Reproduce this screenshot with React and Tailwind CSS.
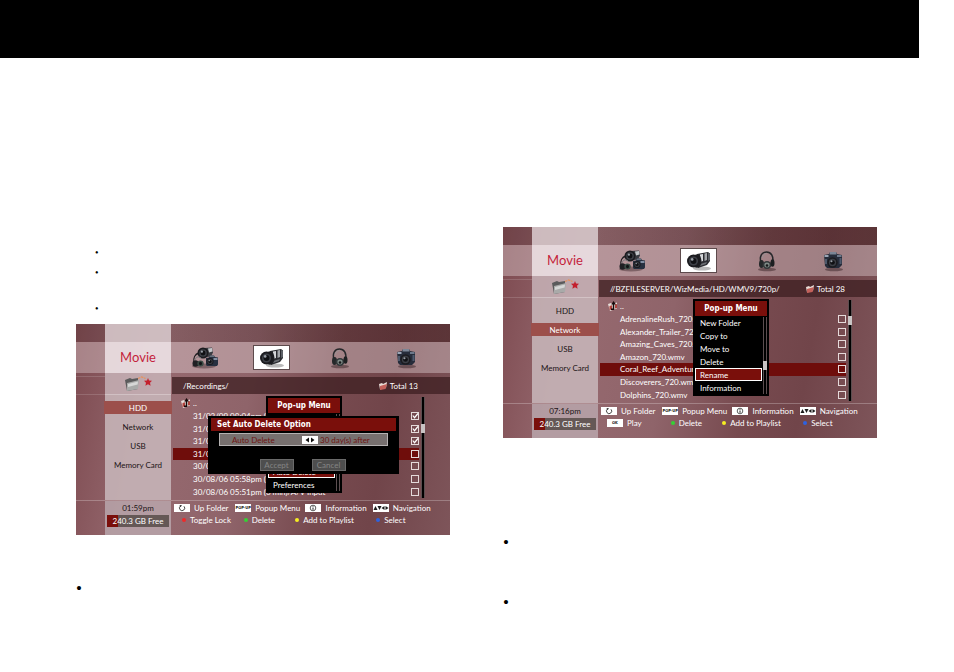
import React from "react";
import clsx from "clsx";

const SECTIONS = ["HDD", "Network", "USB", "Memory Card"];

function Lens({ x, y, r }) {
  return (
    <g>
      <circle cx={x} cy={y} r={r} fill="#1b1b1f" />
      <circle cx={x} cy={y} r={r * 0.7} fill="#3c3f46" />
      <circle cx={x} cy={y} r={r * 0.45} fill="#101114" />
      <circle cx={x - r * 0.2} cy={y - r * 0.25} r={r * 0.2} fill="#9aa0a8" />
    </g>
  );
}

function AllMediaIcon() {
  return (
    <svg viewBox="0 0 28 24" className="h-6 w-7" aria-label="All media">
      <ellipse cx="13" cy="20" rx="12" ry="2.500" fill="#4a3236" opacity=".5" />
      <path d="M13 2l8-.5 1 5-2 4-8 1z" fill="#3a3c42" />
      <path d="M17 2.500l4-.5.500 3.500-3.500 1z" fill="#c3c6c9" />
      <Lens x={12} cy={7} y={7} r={5.500} />
      <path d="M3 17c-1-5 1-9 5-10" fill="none" stroke="#1d1d20" strokeWidth="1.300" />
      <path d="M4 14c1-4 5-4 7-1" fill="none" stroke="#77797c" strokeWidth="1" />
      <ellipse cx="4.500" cy="17.500" rx="3" ry="3.200" fill="#202024" />
      <ellipse cx="9.500" cy="17.500" rx="3.200" ry="3" fill="#3a4a44" />
      <ellipse cx="9.500" cy="17.500" rx="1.500" ry="1.700" fill="#121416" />
      <path d="M15 12l3-.5 1-2h4l1 1.500 3 .5v7l-1 1.500H16l-1-1z" fill="#273040" />
      <path d="M19 9.500h4l.5 1.500h-5z" fill="#66727f" />
      <rect x="22.500" y="12" width="4" height="2" fill="#8390a4" />
      <Lens x={19} y={15.500} r={3.600} />
    </svg>
  );
}

function CamcorderIcon() {
  return (
    <svg viewBox="0 0 28 24" className="h-6 w-7" aria-label="Movie">
      <ellipse cx="17" cy="19.500" rx="9" ry="2" fill="#8a8a8a" opacity=".6" />
      <path d="M12 5l11-2 2 1.500V12l-3 4-9 3z" fill="#2b2c31" />
      <path d="M15 5.500l3-.6v7l-3 1z" fill="#d5d7da" />
      <path d="M19.500 4.500l2.500-.4v7l-2.500 1z" fill="#a5a8ac" />
      <path d="M23 4l2 1v6l-2 1z" fill="#5c6066" />
      <path d="M15 15l7-2-1 2-6 2z" fill="#6a6d72" />
      <ellipse cx="12" cy="12" rx="4.500" ry="6.800" fill="#1d1e22" />
      <Lens x={8.500} y={12} r={6.500} />
    </svg>
  );
}

function HeadphonesIcon() {
  return (
    <svg viewBox="0 0 28 24" className="h-6 w-7" aria-label="Music">
      <ellipse cx="15" cy="20.500" rx="9" ry="1.800" fill="#4a3236" opacity=".6" />
      <path d="M9 14C7 7 10 3 14.500 3S22 7 20.500 14" fill="none" stroke="#26272a" strokeWidth="1.500" />
      <path d="M10 9c1-3 2.500-4.500 4.500-4.500" fill="none" stroke="#94979a" strokeWidth=".7" />
      <ellipse cx="9.500" cy="15" rx="2.500" ry="4" fill="#25282a" />
      <ellipse cx="15" cy="16" rx="4.500" ry="4" fill="#33383a" />
      <ellipse cx="15" cy="16" rx="2.600" ry="2.400" fill="#7e8a86" />
      <ellipse cx="15" cy="16.500" rx="1.300" ry="1.200" fill="#17191b" />
      <ellipse cx="20.500" cy="14" rx="2" ry="3.800" fill="#1d1f21" />
    </svg>
  );
}

function CameraIcon() {
  return (
    <svg viewBox="0 0 28 24" className="h-6 w-7" aria-label="Photo">
      <ellipse cx="15" cy="20.500" rx="9" ry="1.800" fill="#4a3236" opacity=".6" />
      <path d="M5 6l5-1 1-2h6l1 2 5 1v10l-3 3H8l-2-2z" fill="#262c3a" />
      <path d="M11 3h6l.6 2.500h-7.200z" fill="#7a8596" />
      <rect x="5.500" y="6" width="4" height="2" fill="#9ba6b6" />
      <rect x="18" y="6" width="4.500" height="2" fill="#6c788a" />
      <path d="M6 10h2v5H6zM20.500 9h2v6h-2z" fill="#4d596c" />
      <Lens x={13.500} y={13.500} r={5.200} />
    </svg>
  );
}

function FolderStarIcon() {
  return (
    <svg viewBox="0 0 30 16" className="h-4 w-[30px]" aria-hidden="true">
      <path d="M2 4l5-2 2 1 6-1v11l-11 2z" fill="#5b5b5c" />
      <path d="M4 7l12-3-1 9-11 2z" fill="#a9aaa9" />
      <path d="M5 8l10-2.500-.4 3L5 11z" fill="#d6d7d6" />
      <path d="M15 2.500l3.500-1.500 4 1.500" fill="none" stroke="#e8925c" strokeWidth="1.300" strokeDasharray="2.500 .8" />
      <path d="M25 2l1 2.500 3 .3-2 2 .6 3L25 8.200 22.400 9.800l.6-3-2-2 3-.3z" fill="#c4202d" />
    </svg>
  );
}

function SmallFolderIcon() {
  return (
    <svg viewBox="0 0 9 8" className="h-2 w-[9px]" aria-hidden="true">
      <path d="M0 2l3-1 1 1 4-2-1 6-6 1.500z" fill="#e9dcd6" />
      <path d="M1 4l7-2-1.500 5L1 8z" fill="#c4605a" />
    </svg>
  );
}

function ParentIcon() {
  return (
    <svg viewBox="0 0 10 10" className="h-[10px] w-[10px]" aria-hidden="true">
      <path d="M0 3l3-1 1 1 5-1.500v6L2 10z" fill="#e6dcd8" />
      <path d="M1.500 5l2.500-.8v4L1.500 9zM7 3.500L9 3v4l-2 .6z" fill="#b0423c" />
      <path d="M3 8.300h2.500V2.500" fill="none" stroke="#16090a" strokeWidth="1.500" />
      <path d="M3.300 3.500L5.500 0 8 3.500z" fill="#16090a" />
    </svg>
  );
}

function Key({ children }) {
  return (
    <span className="flex h-2 w-4 shrink-0 items-center justify-center bg-white font-['DejaVu_Sans_Condensed','DejaVu_Sans',sans-serif] text-[4px] leading-none font-bold text-[#222]">
      {children}
    </span>
  );
}

function ReturnGlyph() {
  return (
    <svg viewBox="0 0 8 8" className="h-2 w-2" aria-hidden="true">
      <path d="M2.500 2A2.600 2.600 0 1 0 6 2.300" fill="none" stroke="#333" strokeWidth=".9" />
      <path d="M1.500 1l2.500.3-1.500 2z" fill="#333" />
    </svg>
  );
}

function InfoGlyph() {
  return (
    <svg viewBox="0 0 8 8" className="h-2 w-2" aria-hidden="true">
      <circle cx="4" cy="4" r="2.800" fill="none" stroke="#333" strokeWidth=".8" />
      <path d="M4 2.300v.8M4 3.600v2.200" stroke="#222" strokeWidth="1" />
    </svg>
  );
}

function ArrowsGlyph() {
  return (
    <svg viewBox="0 0 16 8" className="h-2 w-4" aria-hidden="true">
      <path d="M.5 6l2-4 2 4zM4.500 2h4l-2 4zM11.500 2v4L8.500 4zM12.500 2v4l3-2z" fill="#1c1c1c" />
    </svg>
  );
}

function Dot({ className }) {
  return <span className={clsx("h-1 w-1 shrink-0 rounded-full", className)} />;
}

function Hint({ mark, children }) {
  return (
    <span className="flex items-center gap-1 whitespace-nowrap">
      {mark}
      {children}
    </span>
  );
}

function Scrollbar({ top }) {
  return (
    <span className="flex w-1 flex-col border-x border-[#5c4e50] bg-black">
      <span className={top} />
      <span className="-mx-px h-[9px] bg-[#c9c4c4]" />
    </span>
  );
}

function PopupMenu({ items, selected }) {
  return (
    <div className="absolute top-[72px] left-[190px] flex h-[97px] w-[76px] flex-col bg-black p-[2px] text-white">
      <h3 className="flex h-[15px] items-center justify-center bg-[#7a0f0b] font-['DejaVu_Sans_Condensed','DejaVu_Sans',sans-serif] text-[8px] font-bold">
        Pop-up Menu
      </h3>
      <div className="flex flex-1 gap-px pt-px">
        <div role="menu" className="flex flex-1 flex-col">
          {items.map((item) => (
            <button
              key={item}
              role="menuitem"
              className={clsx(
                "flex min-h-0 flex-1 items-center border pl-1 text-left leading-none",
                item === selected ? "border-white bg-[#7a0f0b]" : "border-transparent",
              )}
            >
              {item}
            </button>
          ))}
        </div>
        <Scrollbar top="h-[44px]" />
      </div>
    </div>
  );
}

function AutoDeleteDialog() {
  return (
    <div
      role="dialog"
      aria-label="Set Auto Delete Option"
      className="absolute top-[92px] left-[132px] flex h-[58px] w-[191px] flex-col bg-black px-[3px] pt-[2px]"
    >
      <h3 className="flex h-[13px] items-center bg-[#7a0f0b] pl-[6px] font-['DejaVu_Sans_Condensed','DejaVu_Sans',sans-serif] text-[8px] font-bold text-white">
        Set Auto Delete Option
      </h3>
      <div className="mx-2 mt-[2px] flex h-[13px] items-center border border-[#b5b1b1] bg-[#77706f] pl-3 text-[#6e1512]">
        <span className="w-[70px]">Auto Delete</span>
        <button aria-label="Change delay" className="flex h-2 w-4 items-center justify-center bg-white">
          <svg viewBox="0 0 12 6" className="h-[6px] w-3" aria-hidden="true">
            <path d="M5 .500v5L1.500 3zM7 .500v5L10.500 3z" fill="#111" />
          </svg>
        </button>
        <span className="pl-[2px]">30 day(s) after</span>
      </div>
      <div className="mt-[13px] flex justify-center gap-[18px] pr-[2px]">
        {["Accept", "Cancel"].map((name) => (
          <button
            key={name}
            className="flex h-3 w-[34px] items-center justify-center border border-[#6a6a6a] bg-[#4e4e4e] leading-none text-[#858585]"
          >
            {name}
          </button>
        ))}
      </div>
    </div>
  );
}

function MediaScreen({ id, section, path, total, time, files, selected, thumb, lock, children }) {
  return (
    <section className="relative flex h-[211px] flex-col overflow-hidden bg-[linear-gradient(100deg,#7d4a50_0%,#96696f_22%,#8f646a_45%,#774a4f_66%,#71454a_80%,#7e555a_100%)] font-[Lato,sans-serif] text-[8px] leading-none text-white">
      <div className="flex h-[18px] bg-black/10">
        <div className="w-[29px]" />
        <div className="w-[66px] bg-[#d6c6ca]/90" />
        <div className="flex-1 bg-linear-to-r from-transparent to-[#4c2426]/50" />
      </div>
      <div className="flex h-[31px] bg-[#e6d6da]/40">
        <div className="w-[29px]" />
        <h2 className="flex w-[66px] items-center justify-center bg-[#efe4e7]/85 text-[13px] text-[#c41f3c]">
          Movie
        </h2>
        <nav className="grid flex-1 grid-cols-4 items-center justify-items-center pr-[10px]">
          <AllMediaIcon />
          <span className="flex h-[25px] w-[37px] items-center justify-center border border-[#5d4a4c] bg-white">
            <CamcorderIcon />
          </span>
          <HeadphonesIcon />
          <CameraIcon />
        </nav>
      </div>
      <div className="flex h-[22px]">
        <div className="mt-[3px] w-[29px] border-y border-white/15" />
        <div className="flex w-[66px] items-center justify-center border-b border-white/30 bg-[#cbb8bd]/80">
          <FolderStarIcon />
        </div>
        <div className="mt-1 mb-px ml-px flex flex-1 items-center justify-between bg-[#3d1f22]/75 pr-8 pl-[11px]">
          <span>{path}</span>
          <span className="flex items-center gap-[2px]">
            <SmallFolderIcon />
            Total {total}
          </span>
        </div>
      </div>
      <div className="flex h-[105px]">
        <div className="w-[29px]" />
        <nav className="flex w-[66px] flex-col gap-[6px] bg-[#c9b8bc]/85 pt-[6px] text-[#1c1416]">
          {SECTIONS.map((name) => (
            <a
              key={name}
              href={"#" + name}
              className={clsx(
                "-mx-px flex h-[13px] items-center justify-center",
                name === section && "bg-[#9c4f4b] text-white",
              )}
            >
              {name}
            </a>
          ))}
        </nav>
        <div className="flex flex-1 gap-[2px] py-[2px] pr-[25px] pl-[2px]">
          <ul className="flex flex-1 flex-col">
            <li className="flex flex-1 items-center gap-[2px] pl-2">
              <ParentIcon />
              ..
            </li>
            {files.map(([name, checked], i) => (
              <li
                key={name}
                className={clsx("flex flex-1 items-center justify-between pl-5", i === selected && "bg-[#6f0d0b]")}
              >
                <label htmlFor={id + i} className="whitespace-nowrap">
                  {name}
                </label>
                <span className="grid">
                  <input
                    id={id + i}
                    type="checkbox"
                    defaultChecked={checked}
                    className="peer col-start-1 row-start-1 h-2 w-2 appearance-none border border-[#e5dada]"
                  />
                  <svg
                    viewBox="0 0 8 8"
                    className="pointer-events-none col-start-1 row-start-1 hidden h-2 w-2 peer-checked:block"
                    aria-hidden="true"
                  >
                    <path d="M1.800 3.500l1.700 2.200L7 1.500" fill="none" stroke="#fff" strokeWidth="1.200" />
                  </svg>
                </span>
              </li>
            ))}
          </ul>
          <Scrollbar top={thumb} />
        </div>
      </div>
      <div className="flex h-[35px] border-t border-white/25">
        <div className="w-[29px]" />
        <div className="w-[66px] bg-[#b9a6ab]/85 text-center">
          <time className="flex h-[14px] items-center justify-center text-[#1c1416]">{time}</time>
          <p className="mx-[2px] flex h-3 items-center justify-center bg-[linear-gradient(90deg,#7a0f0b_11px,#655856_11px)]">
            240.3 GB Free
          </p>
        </div>
        <footer className="flex flex-1 flex-col gap-1 pt-[3px] pl-[3px]">
          <div className="grid h-2 grid-cols-[61fr_70fr_67fr_77fr] items-center">
            <Hint mark={<Key><ReturnGlyph /></Key>}>Up Folder</Hint>
            <Hint mark={<Key>POP-UP</Key>}>Popup Menu</Hint>
            <Hint mark={<Key><InfoGlyph /></Key>}>Information</Hint>
            <Hint mark={<Key><ArrowsGlyph /></Key>}>Navigation</Hint>
          </div>
          <div className="grid h-2 grid-cols-[61fr_51fr_80fr_75fr] items-center pl-[6px]">
            {lock ? (
              <Hint mark={<Dot className="ml-[2px] bg-[#f02a2a]" />}>Toggle Lock</Hint>
            ) : (
              <Hint mark={<Key>OK</Key>}>Play</Hint>
            )}
            <Hint mark={<Dot className="ml-[2px] bg-[#35d035]" />}>Delete</Hint>
            <Hint mark={<Dot className="ml-[2px] bg-[#f6ee22]" />}>Add to Playlist</Hint>
            <Hint mark={<Dot className="ml-[2px] bg-[#2d62e0]" />}>Select</Hint>
          </div>
        </footer>
      </div>
      {children}
    </section>
  );
}

const RECORDINGS = [
  ["31/03/09 08:04pm (1", true],
  ["31/08/06 07:42pm (2", true],
  ["31/08/06 07:30pm (4", true],
  ["31/08/06 07:12pm (8", false],
  ["30/08/06 06:04pm (3", false],
  ["30/08/06 05:58pm (1", false],
  ["30/08/06 05:51pm (6 min)/A/V Input", false],
];

const VIDEOS = [
  ["AdrenalineRush_720.wmv", false],
  ["Alexander_Trailer_720.wmv", false],
  ["Amazing_Caves_720.wmv", false],
  ["Amazon_720.wmv", false],
  ["Coral_Reef_Adventure_720", false],
  ["Discoverers_720.wmv", false],
  ["Dolphins_720.wmv", false],
];

export default function App() {
  return (
    <div className="min-h-screen bg-white text-black">
      <header className="mr-[35px] h-[58px] bg-black" />
      <main className="grid grid-cols-2 gap-[53px] pr-[77px] pl-[76px]">
        <div className="pt-[185px]">
          <ul className="flex h-[81px] flex-col pl-[19px] font-['Liberation_Serif',serif] text-[10px] leading-5">
            <li>•</li>
            <li className="pb-4">•</li>
            <li>•</li>
          </ul>
          <MediaScreen
            id="rec"
            section="HDD"
            path="/Recordings/"
            total={13}
            time="01:59pm"
            files={RECORDINGS}
            selected={3}
            thumb="h-[27px]"
            lock
          >
            <PopupMenu
              items={["Copy to", "Move to", "Delete", "Rename", "Auto Delete", "Preferences"]}
              selected="Auto Delete"
            />
            <AutoDeleteDialog />
          </MediaScreen>
          <ul className="pt-11 font-['Liberation_Serif',serif] text-[17px] leading-5">
            <li>•</li>
          </ul>
        </div>
        <div className="pt-[169px]">
          <MediaScreen
            id="net"
            section="Network"
            path="//BZFILESERVER/WizMedia/HD/WMV9/720p/"
            total={28}
            time="07:16pm"
            files={VIDEOS}
            selected={4}
            thumb="h-[16px]"
          >
            <PopupMenu
              items={["New Folder", "Copy to", "Move to", "Delete", "Rename", "Information"]}
              selected="Rename"
            />
          </MediaScreen>
          <ul className="flex flex-col gap-10 pt-[95px] font-['Liberation_Serif',serif] text-[17px] leading-5">
            <li>•</li>
            <li>•</li>
          </ul>
        </div>
      </main>
    </div>
  );
}
